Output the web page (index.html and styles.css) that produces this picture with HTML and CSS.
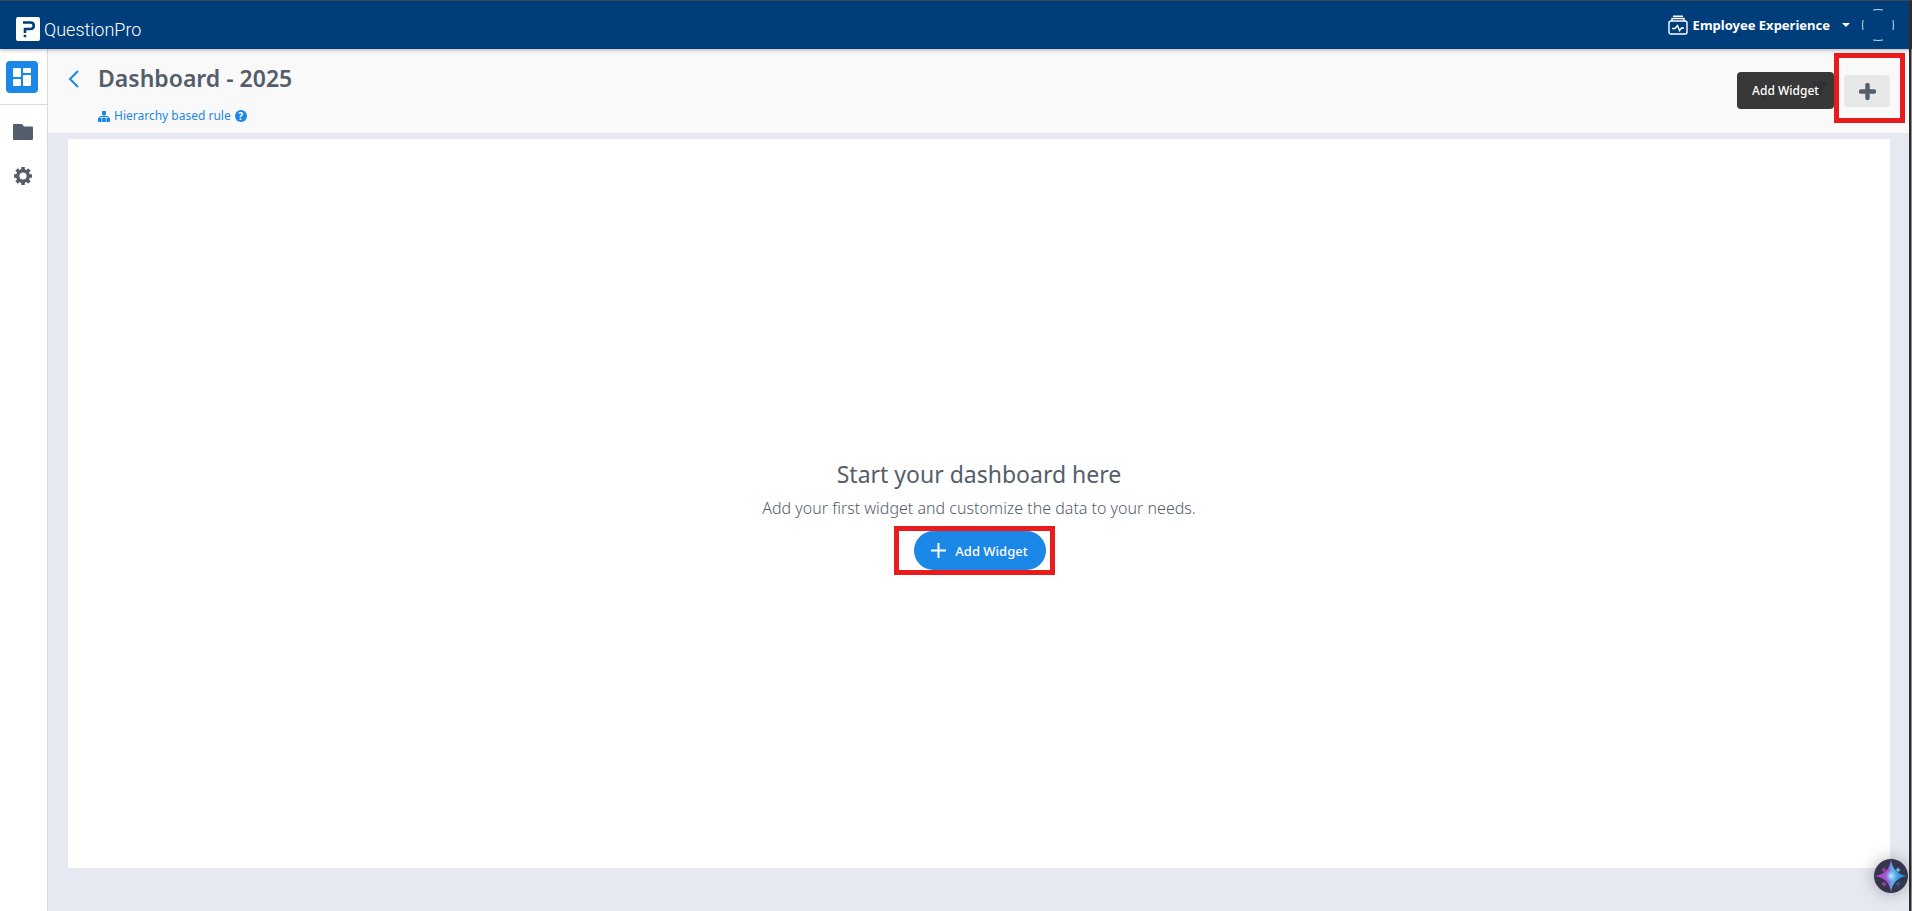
FILE: index.html
```html
<!DOCTYPE html>
<html lang="en">
<head>
  <meta charset="UTF-8" />
  <meta name="viewport" content="width=device-width, initial-scale=1.0"/>
  <title>Dashboard - 2025 | QuestionPro</title>
  <link rel="stylesheet" href="styles.css">
</head>
<body>

  <!-- Header -->
  <header class="topbar">
    <a href="#" class="logo">
      <svg class="logo-mark" viewBox="0 0 24 24" aria-hidden="true">
        <rect width="24" height="24" rx="2" fill="#fff"/>
        <path d="M7 5.500H14.500Q17.800 5.500 17.800 8.700Q17.800 12 14.500 12H9V16" fill="none" stroke="#003e7b" stroke-width="2.600"/>
        <rect x="7.700" y="17.800" width="2.600" height="2.400" fill="#003e7b"/>
      </svg>
      <span>QuestionPro</span>
    </a>
    <div class="account">
      <button type="button" class="product-menu">
        <svg class="product-icon" viewBox="0 0 20 20" fill="none" stroke="#fff" stroke-width="1.400" aria-hidden="true">
          <rect x="1" y="6" width="18" height="13" rx="2"/>
          <path d="M4 6V3.500H16V6M5 1.200H15M4 13.500H7L9.500 10.500L11.500 15.500L13.500 13H16"/>
        </svg>
        <span>Employee Experience</span>
        <svg class="caret" viewBox="0 0 8 4" aria-hidden="true"><path d="M0 0H8L4 4Z" fill="#fff"/></svg>
      </button>
      <a href="#" class="avatar" aria-label="Profile">
        <svg viewBox="0 0 32 32" fill="none" stroke="#fff" stroke-opacity=".8" aria-hidden="true">
          <path d="M11 1Q16 0 21 1M11 31Q16 32 21 31M1 11Q0 16 1 21M31 11Q32 16 31 21"/>
        </svg>
      </a>
    </div>
  </header>

  <div class="layout">
    <!-- Sidebar -->
    <nav class="sidebar">
      <div class="sidebar-top">
        <a href="#" class="side-link active" aria-label="Dashboards">
          <svg width="18" height="18" viewBox="0 0 18 18" fill="#fff" aria-hidden="true">
            <rect width="8" height="9" rx="1"/><rect x="10" width="8" height="5" rx="1"/>
            <rect y="11" width="8" height="7" rx="1"/><rect x="10" y="7" width="8" height="11" rx="1"/>
          </svg>
        </a>
      </div>
      <a href="#" class="side-link" aria-label="Files">
        <svg width="20" height="16" viewBox="0 0 20 16" fill="#545e6b" aria-hidden="true">
          <path d="M1 0H9L11 2.500H19Q20 2.500 20 3.500V15Q20 16 19 16H1Q0 16 0 15V1Q0 0 1 0Z"/>
        </svg>
      </a>
      <a href="#" class="side-link" aria-label="Settings">
        <svg width="18" height="18" viewBox="0 0 18 18" aria-hidden="true">
          <circle cx="9" cy="9" r="5.300" fill="none" stroke="#545e6b" stroke-width="3.400"/>
          <path d="M9 0V3M9 15V18M0 9H3M15 9H18M2.600 2.600L4.800 4.800M13.200 13.200L15.400 15.400M2.600 15.400L4.800 13.200M13.200 4.800L15.400 2.600" stroke="#545e6b" stroke-width="3.600"/>
        </svg>
      </a>
    </nav>

    <main class="main">
      <!-- Page heading -->
      <section class="page-head">
        <a href="#" class="back" aria-label="Back">
          <svg width="11" height="18" viewBox="0 0 11 18" fill="none" stroke="#1b87e6" stroke-width="2" aria-hidden="true"><path d="M10 1L2 9L10 17"/></svg>
        </a>
        <div class="titles">
          <h1>Dashboard - 2025</h1>
          <a href="#" class="rule">
            <svg width="12" height="11" viewBox="0 0 12 11" aria-hidden="true">
              <path d="M4 0H8V4H4ZM0 7H3.600V11H0ZM4.200 7H7.800V11H4.200ZM8.400 7H12V11H8.400Z" fill="#1b87e6"/>
              <path d="M6 3V8M1.800 8V5.500H10.200V8" fill="none" stroke="#1b87e6"/>
            </svg>
            <span>Hierarchy based rule</span>
            <span class="help">?</span>
          </a>
        </div>
        <div class="actions">
          <div class="tools">
            <button type="button" class="tool" aria-label="Share">
              <svg width="18" height="18" viewBox="0 0 18 18" aria-hidden="true"><path d="M2 18V7Q2 5 4 5H11V1L17 7L11 13V9H4V18Z" fill="#00408c"/></svg>
            </button>
            <button type="button" class="tool" aria-label="Filter">
              <svg width="18" height="17" viewBox="0 0 18 17" aria-hidden="true"><path d="M0 0H18L11 8V17L7 13V8Z" fill="#00408c"/></svg>
            </button>
            <span class="tooltip" role="tooltip" id="add-tip">Add Widget</span>
          </div>
          <div class="mark mark-action">
            <button type="button" class="add-icon" aria-label="Add widget" aria-describedby="add-tip">
              <svg width="17" height="17" viewBox="0 0 17 17" aria-hidden="true"><path d="M8.500 2V15M2 8.500H15" stroke="#545e6b" stroke-width="4.400" stroke-linecap="round"/></svg>
            </button>
          </div>
        </div>
      </section>

      <!-- Empty dashboard -->
      <section class="canvas">
        <h2>Start your dashboard here</h2>
        <p>Add your first widget and customize the data to your needs.</p>
        <div class="mark mark-button">
          <button type="button" class="btn">
            <svg width="15" height="15" viewBox="0 0 15 15" aria-hidden="true"><path d="M7.500 0V15M0 7.500H15" stroke="#fff" stroke-width="2"/></svg>
            <span>Add Widget</span>
          </button>
        </div>
      </section>
    </main>
    <div class="edge"></div>
  </div>

  <!-- Assistant -->
  <button type="button" class="assistant" aria-label="Assistant">
    <svg viewBox="0 0 34 34" aria-hidden="true">
      <defs>
        <linearGradient id="spark" x1="0" y1="0" x2="1" y2="0">
          <stop offset="0" stop-color="#c03be0"/><stop offset=".4" stop-color="#9a58cf"/>
          <stop offset=".55" stop-color="#5fb4ef"/><stop offset="1" stop-color="#1e75c8"/>
        </linearGradient>
        <radialGradient id="glow">
          <stop offset="0" stop-color="#c8f4ff"/><stop offset="1" stop-color="#7cc8f5" stop-opacity="0"/>
        </radialGradient>
      </defs>
      <circle cx="17" cy="17" r="17" fill="#35364b"/>
      <path d="M17 1Q19 15 33 17Q19 19 17 33Q15 19 1 17Q15 15 17 1Z" fill="url(#spark)"/>
      <circle cx="17" cy="17" r="6" fill="url(#glow)"/>
      <path d="M10 8L11 10L13 11L11 12L10 14L9 12L7 11L9 10ZM10 22L11 24L13 25L11 26L10 28L9 26L7 25L9 24Z" fill="#a43bb6"/>
      <path d="M24 8L25 10L27 11L25 12L24 14L23 12L21 11L23 10Z" fill="#63bddb"/>
      <path d="M24 22L25 24L27 25L25 26L24 28L23 26L21 25L23 24Z" fill="#286397"/>
    </svg>
  </button>

</body>
</html>
```

FILE: styles.css
```css
/* Global Styles */
* {
  box-sizing: border-box;
}

body {
  margin: 0;
  min-height: 100vh;
  display: flex;
  flex-direction: column;
  font-family: "Noto Sans", "Open Sans", sans-serif;
  color: #545e6b;
  background-color: #e6e9f2;
}

h1, h2, p {
  margin: 0;
}

a {
  color: #1b87e6;
  text-decoration: none;
}

button {
  padding: 0;
  border: none;
  font-family: inherit;
  cursor: pointer;
}

svg {
  display: block;
  flex: none;
}

/* Header */
.topbar {
  position: relative;
  display: flex;
  justify-content: space-between;
  height: 49px;
  padding: 0 15px 0 16px;
  border-top: 1px solid #45454d;
  border-right: 3px solid #2b2b2b;
  background-color: #003e7b;
  box-shadow: 0 1px 4px rgba(0, 0, 0, 0.3);
}

.logo {
  display: flex;
  align-items: center;
  gap: 4px;
  padding-top: 8px;
  color: white;
  font-family: Roboto, sans-serif;
  font-size: 18px;
  font-weight: 300;
}

.logo-mark {
  width: 24px;
  height: 24px;
}

.account {
  display: flex;
  align-items: center;
  gap: 12px;
}

.product-menu {
  display: flex;
  align-items: center;
  gap: 5px;
  color: white;
  background: none;
  font-size: 13px;
  font-weight: bold;
}

.product-icon {
  width: 20px;
  height: 20px;
}

.caret {
  width: 8px;
  height: 4px;
  margin-left: 7px;
}

.avatar {
  width: 32px;
  height: 32px;
}

.layout {
  flex: 1;
  display: flex;
}

/* Sidebar */
.sidebar {
  width: 48px;
  border-right: 1px solid #d9dbe0;
  background-color: white;
}

.sidebar-top {
  padding: 12px 0 11px;
  margin-bottom: 11px;
  border-bottom: 1px solid #d9dbe0;
}

.side-link {
  display: flex;
  align-items: center;
  justify-content: center;
  width: 32px;
  height: 32px;
  margin: 0 auto 12px 7px;
  border-radius: 4px;
}

.side-link.active {
  margin: 0 auto 0 6px;
  background-color: #1b87e6;
}

/* Page heading */
.main {
  flex: 1;
  display: flex;
  flex-direction: column;
}

.page-head {
  display: flex;
  height: 84px;
  padding-left: 20px;
  background-color: #f9f9f9;
}

.back {
  padding-top: 21px;
}

.titles {
  margin-left: 19px;
  padding-top: 13px;
}

h1 {
  font-size: 23px;
  font-weight: 600;
  line-height: 32px;
}

.rule {
  display: flex;
  align-items: center;
  gap: 4px;
  margin-top: 13px;
  font-size: 12px;
  line-height: 18px;
}

.help {
  width: 12px;
  height: 12px;
  border-radius: 50%;
  color: white;
  background-color: #1b87e6;
  font-size: 10px;
  font-weight: bold;
  line-height: 12px;
  text-align: center;
}

.actions {
  display: flex;
  align-items: flex-start;
  margin-left: auto;
  padding: 4px 4px 0 0;
}

.tools {
  position: relative;
  display: flex;
  align-items: center;
  justify-content: space-between;
  width: 97px;
  height: 37px;
  margin-top: 19px;
  padding: 0 5px 0 24px;
}

.tool {
  background: none;
}

.tooltip {
  position: absolute;
  inset: 0;
  border-radius: 4px;
  color: white;
  background-color: rgba(48, 48, 48, 0.96);
  font-size: 12px;
  font-weight: 500;
  line-height: 37px;
  text-align: center;
}

.mark {
  border: 5px solid #e81c1c;
}

.mark-action {
  padding: 17px 10px 11px 5px;
}

.add-icon {
  display: flex;
  align-items: center;
  justify-content: center;
  width: 46px;
  height: 32px;
  border-radius: 4px;
  background-color: #e8e8e8;
}

/* Empty dashboard */
.canvas {
  flex: 1;
  display: flex;
  flex-direction: column;
  align-items: center;
  justify-content: center;
  margin: 6px 19px 43px 20px;
  padding-top: 24px;
  background-color: white;
}

h2 {
  font-size: 23px;
  font-weight: normal;
  line-height: 36px;
}

.canvas p {
  margin-top: 2px;
  font-size: 16px;
  font-weight: 300;
  line-height: 28px;
}

.mark-button {
  margin: 4px 10px 0 0;
  padding: 0 4px 0 15px;
}

.btn {
  display: flex;
  align-items: center;
  justify-content: center;
  gap: 9px;
  width: 132px;
  height: 39px;
  border-radius: 20px;
  color: white;
  background-color: #1b87e6;
  font-size: 13px;
  font-weight: 500;
}

/* Window edge */
.edge {
  width: 3px;
  border-right: 1px solid #8f8d8a;
  background-color: #2b2b2b;
}

/* Assistant */
.assistant {
  position: fixed;
  right: 4px;
  bottom: 18px;
  width: 34px;
  height: 34px;
  border-radius: 50%;
  background: none;
  box-shadow: 0 0 16px rgba(0, 0, 0, 0.3);
}
```
